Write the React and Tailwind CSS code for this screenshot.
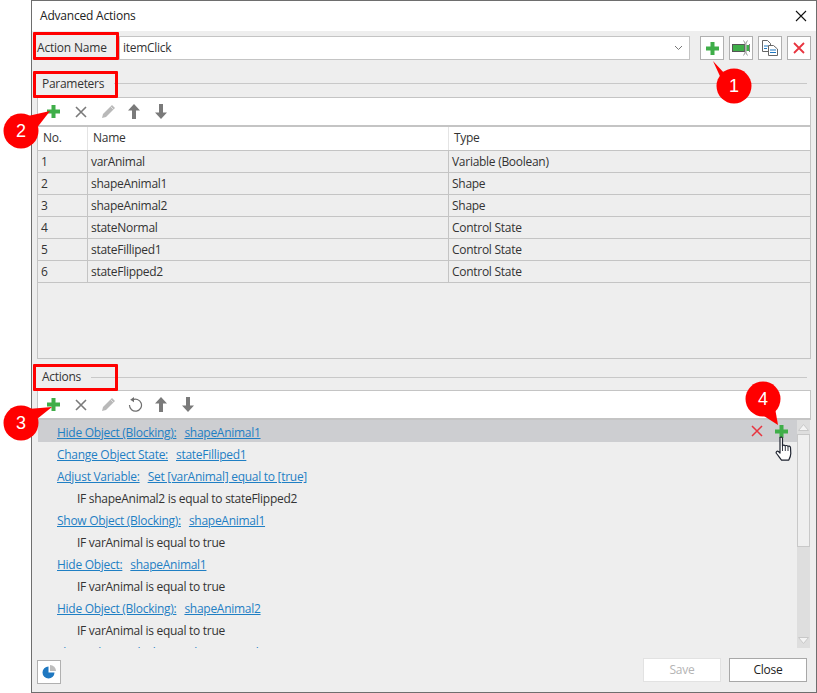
import React from 'react';

const params = [
  ['1', 'varAnimal', 'Variable (Boolean)'],
  ['2', 'shapeAnimal1', 'Shape'],
  ['3', 'shapeAnimal2', 'Shape'],
  ['4', 'stateNormal', 'Control State'],
  ['5', 'stateFilliped1', 'Control State'],
  ['6', 'stateFlipped2', 'Control State'],
];

const actions = [
  { link: 'Hide Object (Blocking):', target: 'shapeAnimal1', selected: true },
  { link: 'Change Object State:', target: 'stateFilliped1' },
  { link: 'Adjust Variable:', target: 'Set [varAnimal] equal to [true]' },
  { cond: 'IF shapeAnimal2 is equal to stateFlipped2' },
  { link: 'Show Object (Blocking):', target: 'shapeAnimal1' },
  { cond: 'IF varAnimal is equal to true' },
  { link: 'Hide Object:', target: 'shapeAnimal1' },
  { cond: 'IF varAnimal is equal to true' },
  { link: 'Hide Object (Blocking):', target: 'shapeAnimal2' },
  { cond: 'IF varAnimal is equal to true' },
  { link: 'Show Object (Blocking):', target: 'shapeAnimal2' },
];

const PlusIcon = ({ size = 13 }) => (
  <svg width={size} height={size} viewBox="0 0 13 13">
    <path d="M4.5 0h4v4.5H13v4H8.5V13h-4V8.5H0v-4h4.5z" fill="#3fae49" />
  </svg>
);

const XIcon = ({ color = '#7a7a7a', size = 12, width = 1.6 }) => (
  <svg width={size} height={size} viewBox="0 0 12 12">
    <path d="M1 1l10 10M11 1L1 11" stroke={color} strokeWidth={width} fill="none" />
  </svg>
);

const PencilIcon = () => (
  <svg width="15" height="15" viewBox="0 0 15 15">
    <path d="M11 1l3 3-9 9-4 1 1-4z" fill="#b9b9b9" />
    <path d="M9.5 2.5l3 3" stroke="#eeeeee" strokeWidth="0.8" />
  </svg>
);

const UpIcon = () => (
  <svg width="12" height="15" viewBox="0 0 12 15">
    <path d="M6 0l6 6.5H8V15H4V6.500H0z" fill="#7a7a7a" />
  </svg>
);

const DownIcon = () => (
  <svg width="12" height="15" viewBox="0 0 12 15">
    <path d="M6 15L0 8.500h4V0h4v8.500h4z" fill="#7a7a7a" />
  </svg>
);

const UndoIcon = () => (
  <svg width="15" height="15" viewBox="0 0 15 15">
    <path d="M4.300 3.100A6 6 0 1 1 1.500 8" stroke="#6f6f6f" strokeWidth="1.200" fill="none" />
    <path d="M6 0v5.200L2.200 2.800z" fill="#6f6f6f" />
  </svg>
);

const Toolbar = ({ undo }) => (
  <div className="flex h-[30px] items-center border-x border-t border-b-2 border-x-[#c4c4c4] border-t-[#c4c4c4] border-b-[#c4c4c4] bg-white pl-[9px]">
    <div className="flex w-[27px]"><PlusIcon /></div>
    <div className="flex w-[27px] pl-[1px]"><XIcon /></div>
    <div className="flex w-[27px]"><PencilIcon /></div>
    {undo && <div className="flex w-[27px]"><UndoIcon /></div>}
    <div className="flex w-[27px]"><UpIcon /></div>
    <div className="flex w-[27px]"><DownIcon /></div>
  </div>
);

const SectionTitle = ({ title, padTop }) => (
  <div className={`flex items-center pl-[10px] pr-[9px] ${padTop}`}>
    <span>{title}</span>
    <div className="ml-[10px] h-px flex-1 bg-[#c8c8c8]" />
  </div>
);

// red numbered callout with its pointer; box is the svg area on the page
const Callout = ({ n, left, top, w, h, cx, cy, tail }) => (
  <div className="absolute" style={{ left, top, width: w, height: h }}>
    <svg width={w} height={h} className="absolute top-0 left-0">
      <polygon points={tail} fill="#ff0000" />
      <circle cx={cx} cy={cy} r="17.500" fill="#ff0000" />
    </svg>
    <span
      className="absolute w-[36px] text-center font-['Liberation_Sans',sans-serif] text-[18px] leading-[20px] tracking-normal text-white"
      style={{ left: cx - 18, top: cy - 10 }}
    >
      {n}
    </span>
  </div>
);

const HandCursor = () => (
  <svg width="18" height="27" viewBox="0 0 18 27">
    <path
      d="M5 1.500c1 -.8 2.400 -.4 2.500 1V10c.2 -1.200 2.600 -1.200 2.800 .2 .3 -1 2.400 -1 2.700 .4 .4 -.8 2.300 -.6 2.500 1l.3 6c0 2.500 -1 4.500 -2 6.500H6.500C5 22.500 3.500 20 1.500 17.500c-1 -1.500 .5 -3 2 -2L5 17z"
      fill="#ffffff"
      stroke="#1f2430"
      strokeWidth="1.200"
      strokeLinejoin="round"
    />
    <path d="M7.500 10v5M10.300 10.500V15M13 11v4" stroke="#1f2430" strokeWidth="0.900" />
  </svg>
);

const App = () => {
  return (
    <div className="relative h-[693px] w-[817px] bg-white pl-[31px] font-['Open_Sans',sans-serif] text-[12px] tracking-[-0.28px] text-[#333333]">
      <div className="flex h-[693px] w-[786px] flex-col border border-[#6e6e6e] bg-[#eeeeee]">
        <div className="flex h-[30px] items-center justify-between bg-white pr-[9px] pl-[8px] tracking-[-0.2px] text-[#222222]">
          <span>Advanced Actions</span>
          <XIcon color="#111111" size={12} width={1.100} />
        </div>

        <div className="flex h-[29px] items-end pr-[4px] pl-[5px]">
          <span className="w-[82px] self-center pt-[5px] tracking-[-0.2px]">Action Name</span>
          <div className="flex h-[24px] w-[571px] items-center justify-between border border-[#c4c4c4] bg-white pr-[6px] pl-[3px]">
            <span>itemClick</span>
            <svg width="9" height="6" viewBox="0 0 9 6">
              <path d="M1 1l3.500 3.500L8 1" stroke="#777777" fill="none" />
            </svg>
          </div>
          <div className="ml-[10px] flex gap-[5px]">
            <div className="flex h-[24px] w-[24px] items-center justify-center border border-[#b0b0b0] bg-white">
              <PlusIcon />
            </div>
            <div className="flex h-[24px] w-[24px] items-center justify-center border border-[#b0b0b0] bg-white">
              <svg width="18" height="16" viewBox="0 0 18 16">
                <rect x="0.500" y="4.500" width="12" height="7" fill="#3fae49" stroke="#555555" />
                <path d="M11.500 .500l1.500 2.500v10l-1.500 2.500M15.500 .500L14 3v10l1.500 2.500" stroke="#808080" strokeWidth="0.800" fill="none" />
                <rect x="14.500" y="5" width="2.500" height="6" fill="#3fae49" />
                <path d="M17.500 4v8" stroke="#808080" />
              </svg>
            </div>
            <div className="flex h-[24px] w-[24px] items-center justify-center border border-[#b0b0b0] bg-white">
              <svg width="16" height="16" viewBox="0 0 16 16">
                <path d="M.500 .500h5l3 3v8h-8z" fill="#ffffff" stroke="#666666" />
                <path d="M6.500 5.500h5l4 3.500v6.500h-9z" fill="#ffffff" stroke="#666666" />
                <path d="M2 6h4M2 8.500h3M8 10h6M8 12.500h6" stroke="#1f78c1" strokeWidth="1.200" />
              </svg>
            </div>
            <div className="flex h-[24px] w-[24px] items-center justify-center border border-[#b0b0b0] bg-white">
              <XIcon color="#e8343f" size={12} width={1.800} />
            </div>
          </div>
        </div>

        <SectionTitle title="Parameters" padTop="h-[37px] pt-[10px]" />

        <div className="mr-[5px] ml-[5px]">
          <Toolbar />
          <div className="flex h-[232px] flex-col border-x border-b border-[#c4c4c4]">
            <div className="grid h-[24px] grid-cols-[50px_361px_1fr] border-b border-[#c4c4c4] bg-white leading-[21px]">
              <span className="border-r border-[#e4e4e4] pl-[5px]">No.</span>
              <span className="border-r border-[#e4e4e4] pl-[5px]">Name</span>
              <span className="pl-[5px]">Type</span>
            </div>
            {params.map((row) => (
              <div
                key={row[0]}
                className="grid h-[22px] grid-cols-[50px_361px_1fr] border-b border-[#c4c4c4] leading-[21px]"
              >
                <span className="border-r border-[#c4c4c4] pl-[3px]">{row[0]}</span>
                <span className="border-r border-[#c4c4c4] pl-[3px]">{row[1]}</span>
                <span className="pl-[3px]">{row[2]}</span>
              </div>
            ))}
          </div>
        </div>

        <SectionTitle title="Actions" padTop="h-[31px] pt-[5px]" />

        <div className="mr-[5px] ml-[5px]">
          <Toolbar undo />
          <div className="flex h-[228px]">
            <div className="w-[760px] overflow-hidden pl-px">
              {actions.map((a, i) => (
                <div
                  key={i}
                  className={`flex h-[22px] shrink-0 items-center justify-between pr-[9px] ${a.selected ? 'bg-[#cdced1]' : ''}`}
                >
                  {a.link ? (
                    <div className="flex gap-[8px] pt-[4px] pl-[19px] text-[#1f7fc4]">
                      <span className="underline">{a.link}</span>
                      <span className="underline">{a.target}</span>
                    </div>
                  ) : (
                    <span className="pt-[4px] pl-[39px]">{a.cond}</span>
                  )}
                  {a.selected && (
                    <div className="flex items-center gap-[12px]">
                      <XIcon color="#e8343f" size={12} width={1.500} />
                      <PlusIcon />
                    </div>
                  )}
                </div>
              ))}
            </div>
            <div className="flex h-[228px] w-[13px] flex-col items-center bg-[#dedede] py-[4px]">
              <svg width="11" height="7" viewBox="0 0 11 7">
                <path d="M5.500 .500L10.500 6.500H.500z" fill="#f4f4f4" stroke="#c8c8c8" />
              </svg>
              <div className="mt-[3px] h-[113px] w-[13px] border border-[#c8c8c8] bg-[#efefef]" />
              <div className="flex-1" />
              <svg width="11" height="7" viewBox="0 0 11 7">
                <path d="M5.500 6.500L10.500 .500H.500z" fill="#f4f4f4" stroke="#c8c8c8" />
              </svg>
            </div>
          </div>
        </div>

        <div className="flex flex-1 items-start justify-between pr-[9px] pl-[5px]">
          <div className="mt-[12px] flex h-[24px] w-[24px] items-center justify-center border border-[#b0b0b0] bg-white">
            <svg width="14" height="14" viewBox="0 0 14 14">
              <path d="M6.500 1.500v6h6A6 6 0 1 1 6.500 1.500z" fill="#1f78c1" />
              <path d="M8 0a6 6 0 0 1 6 6H8z" fill="#bdbdbd" />
            </svg>
          </div>
          <div className="mt-[10px] flex gap-[8px]">
            <button className="h-[24px] w-[78px] border border-[#e2e2e2] bg-white text-[#b4b4b4]">Save</button>
            <button className="h-[24px] w-[78px] border border-[#a8a8a8] bg-white text-[#222222]">Close</button>
          </div>
        </div>
      </div>

      <div className="absolute top-[32px] left-[33px] h-[28px] w-[86px] rounded-[1px] border-[3px] border-[#ff0000]" />
      <div className="absolute top-[71px] left-[33px] h-[27px] w-[85px] rounded-[1px] border-[3px] border-[#ff0000]" />
      <div className="absolute top-[364px] left-[33px] h-[27px] w-[85px] rounded-[1px] border-[3px] border-[#ff0000]" />

      <Callout n="1" left={705} top={55} w={50} h={50} cx={29} cy={31} tail="8,6 20,19 30,22 19,30" />
      <Callout n="2" left={0} top={105} w={60} h={45} cx={21} cy={26} tail="50,6 28,11 36,24" />
      <Callout n="3" left={0} top={400} w={60} h={45} cx={21} cy={23} tail="52,7 28,9 37,19" />
      <Callout n="4" left={740} top={378} w={50} h={50} cx={23} cy={21} tail="38,47 21,36 35,30" />

      <div className="absolute top-[436px] left-[775px]">
        <HandCursor />
      </div>
    </div>
  );
};

export default App;
